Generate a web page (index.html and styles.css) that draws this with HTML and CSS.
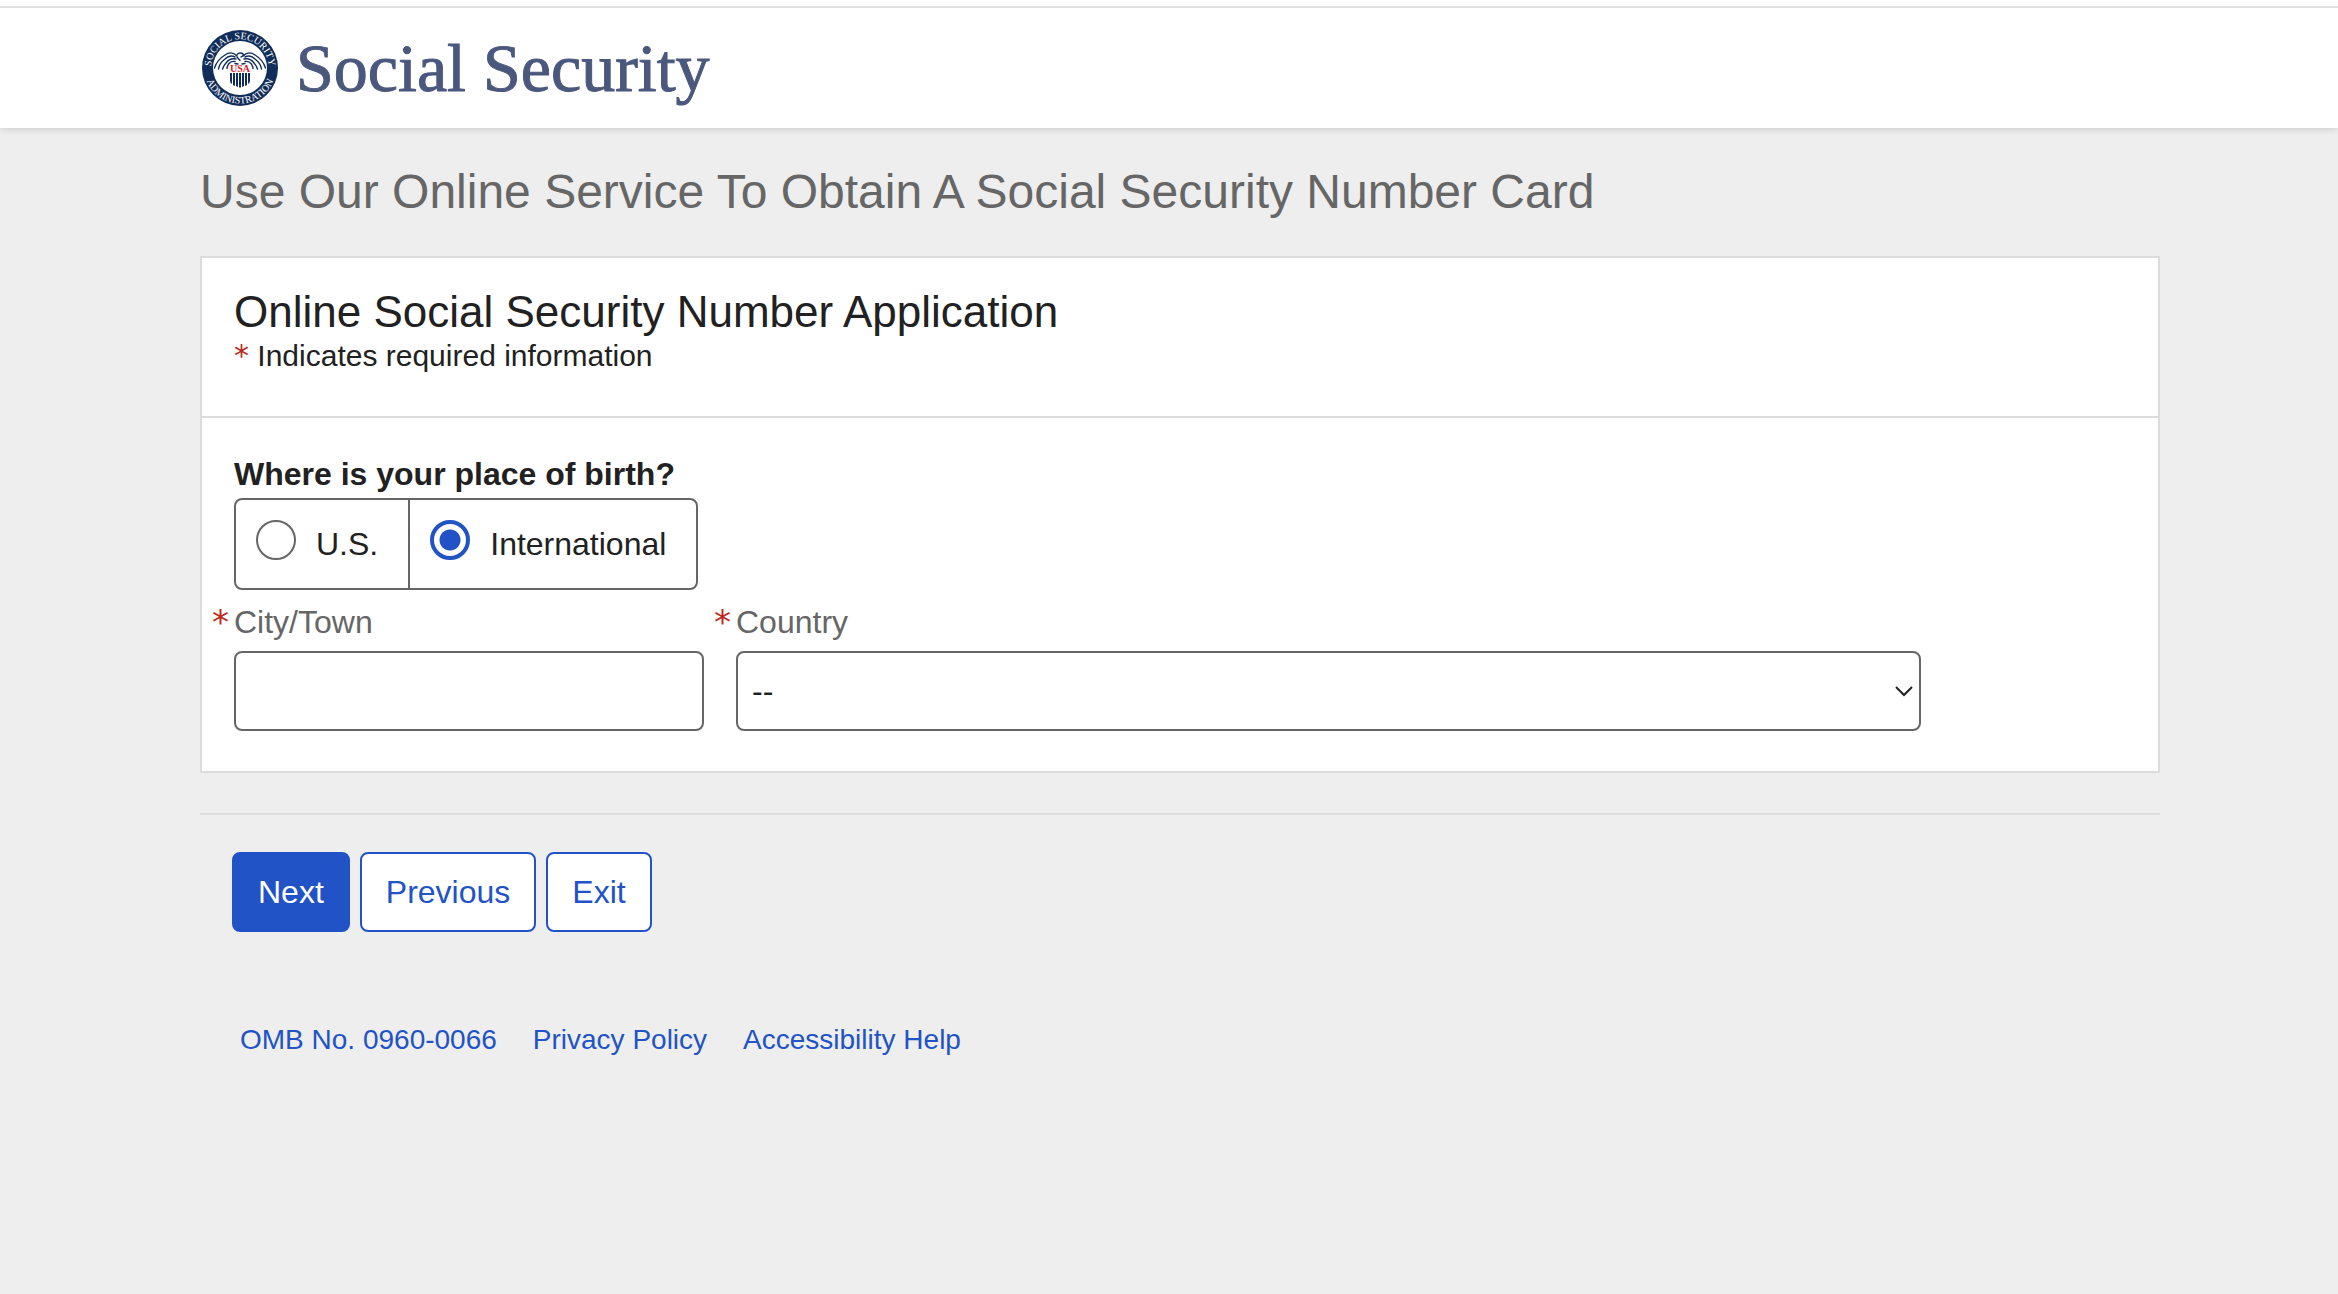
FILE: index.html
```html
<!DOCTYPE html>
<html lang="en">
<head>
    <meta charset="UTF-8">
    <meta name="viewport" content="width=device-width, initial-scale=1.0">
    <title>Social Security Number Application</title>
    <link rel="stylesheet" href="styles.css">
</head>
<body>
    <header class="header">
        <div class="brand">
            <svg class="seal" viewBox="0 0 76 76" aria-hidden="true">
                <defs>
                    <path id="arc-top" d="M9.4 43 A29 29 0 1 1 66.6 43"/>
                    <path id="arc-bottom" d="M2.8 32 A35.7 35.7 0 1 0 73.2 32"/>
                </defs>
                <circle cx="38" cy="38" r="38" fill="#112e5a"/>
                <circle cx="38" cy="38" r="27" fill="#fff"/>
                <text class="seal-text"><textPath href="#arc-top" startOffset="50%">SOCIAL SECURITY</textPath></text>
                <text class="seal-text"><textPath href="#arc-bottom" startOffset="50%">ADMINISTRATION</textPath></text>
                <!-- wings -->
                <g fill="none" stroke="#112e5a" stroke-width="1.4" stroke-linecap="round">
                    <path d="M35 26 C31 22 27 22 23 25 C18 28 14 33 12.500 38"/>
                    <path d="M33 27 C29 25 26 26 23 29 C19 32 17 35 16.500 39"/>
                    <path d="M34 29 C29 28 26 30 24 33 C22 35 21 37 20.500 39"/>
                    <path d="M33 31.500 C30 31 28 32 26.500 34 C25.500 36 25 37 25 38.500"/>
                    <path d="M41 26 C45 22 49 22 53 25 C58 28 62 33 63.500 38"/>
                    <path d="M43 27 C47 25 50 26 53 29 C57 32 59 35 59.500 39"/>
                    <path d="M42 29 C47 28 50 30 52 33 C54 35 55 37 55.500 39"/>
                    <path d="M43 31.500 C46 31 48 32 49.500 34 C50.500 36 51 37 51 38.500"/>
                    <path d="M35 24.500 C37 22.500 40 22.500 42 25 L39 27 M35 27 L38 30.500 M33 33.500 L36 34 M40 34 L43 33.500"/>
                </g>
                <text class="seal-usa" x="38" y="42">USA</text>
                <!-- shield -->
                <path fill="#112e5a" d="M28 43 h2 v11 q-2 -1 -2 -3z M31 43 h2 v13 l-2 -1z M34 43 h2 v14 l-2 -1z M37 43 h2 v14 l-1 1 l-1 -1z M40 43 h2 v13 l-2 1z M43 43 h2 v12 l-2 1z M46 43 h2 v8 q0 2 -2 3z"/>
            </svg>
            <span class="brand-name">Social Security</span>
        </div>
    </header>

    <main class="main">
        <h1 class="title">Use Our Online Service To Obtain A Social Security Number Card</h1>

        <form>
            <section class="card">
                <div class="card-header">
                    <h2 class="card-title">Online Social Security Number Application</h2>
                    <p class="hint"><span class="star">*</span> Indicates required information</p>
                </div>
                <div class="card-body">
                    <fieldset class="question">
                        <legend class="legend">Where is your place of birth?</legend>
                        <div class="options">
                            <label class="option">
                                <input type="radio" name="birthplace" value="us">
                                <span>U.S.</span>
                            </label>
                            <label class="option">
                                <input type="radio" name="birthplace" value="international" checked>
                                <span>International</span>
                            </label>
                        </div>
                    </fieldset>
                    <div class="fields">
                        <div class="field city">
                            <label class="required" for="city">City/Town</label>
                            <input class="control" type="text" id="city">
                        </div>
                        <div class="field country">
                            <label class="required" for="country">Country</label>
                            <div class="select-wrap">
                                <select class="control" id="country">
                                    <option>--</option>
                                </select>
                                <svg class="arrow" viewBox="0 0 18 12" aria-hidden="true">
                                    <path d="M1 2 L9 10 L17 2" fill="none" stroke="#212121" stroke-width="2"/>
                                </svg>
                            </div>
                        </div>
                    </div>
                </div>
            </section>

            <div class="actions">
                <button type="submit" class="button primary">Next</button>
                <button type="button" class="button">Previous</button>
                <button type="button" class="button">Exit</button>
            </div>
        </form>
    </main>

    <footer class="footer">
        <a href="#">OMB No. 0960-0066</a>
        <a href="#">Privacy Policy</a>
        <a href="#">Accessibility Help</a>
    </footer>
</body>
</html>
```

FILE: styles.css
```css
* {
    box-sizing: border-box;
}

body {
    margin: 0;
    min-height: 100vh;
    border-top: 6px solid #fff;
    background: #eee;
    color: #212121;
    font-family: Helvetica, "Liberation Sans", Arial, sans-serif;
    font-size: 32px;
    line-height: 36px;
}

.header {
    padding: 22px 178px 22px 200px;
    border-top: 2px solid #e1e1e1;
    background: #fff;
    box-shadow: 0 2px 6px rgba(0, 0, 0, 0.12);
}

.brand {
    display: flex;
    align-items: center;
    gap: 18px;
}

.seal {
    width: 76px;
    height: 76px;
    margin-left: 2px;
}

.seal-text {
    font-family: "Liberation Serif", serif;
    font-size: 10px;
    text-anchor: middle;
    fill: #fff;
}

.seal-usa {
    font-family: "Liberation Serif", serif;
    font-size: 10px;
    font-weight: bold;
    text-anchor: middle;
    fill: #d8232a;
}

.brand-name {
    font-family: Georgia, "Liberation Serif", serif;
    font-size: 68px;
    line-height: 76px;
    color: #4a587e;
    -webkit-text-stroke: 1px #4a587e;
}

.main {
    padding: 36px 178px 0 200px;
}

.title {
    margin: 0 0 36px;
    font-size: 48px;
    line-height: 56px;
    font-weight: normal;
    color: #666;
}

.card {
    border: 2px solid #ddd;
    background: #fff;
}

.card-header {
    padding: 28px 32px 42px;
    border-bottom: 2px solid #ddd;
}

.card-title {
    margin: 0;
    font-size: 44px;
    line-height: 52px;
    font-weight: normal;
}

.hint {
    margin: 0;
    font-size: 30px;
}

.star {
    color: #c0281c;
    font-family: "DejaVu Sans", sans-serif;
    line-height: 1;
}

.card-body {
    padding: 38px 32px 40px;
}

.question {
    margin: 0;
    padding: 0;
    border: 0;
}

.legend {
    padding: 0;
    margin-bottom: 6px;
    font-weight: bold;
}

.options {
    display: inline-flex;
    vertical-align: top;
    border: 2px solid #666;
    border-radius: 8px;
}

.option {
    display: flex;
    align-items: flex-start;
    gap: 20px;
    height: 88px;
    padding: 20px 30px 0 20px;
}

.option + .option {
    border-left: 2px solid #666;
}

.option span {
    padding-top: 6px;
}

.option input {
    appearance: none;
    width: 40px;
    height: 40px;
    margin: 0;
    border: 2px solid #666;
    border-radius: 50%;
    background: #fff;
}

.option input:checked {
    border: 4px solid #2153c7;
    background: radial-gradient(circle, #2153c7 10px, #fff 11px);
}

.fields {
    display: flex;
    gap: 32px;
    margin-top: 14px;
}

.field {
    display: flex;
    flex-direction: column;
    gap: 11px;
}

.city {
    width: 470px;
}

.country {
    width: 1185px;
}

.required {
    position: relative;
    color: #666;
}

.required::before {
    content: "*";
    position: absolute;
    right: 100%;
    padding-right: 5px;
    color: #c0281c;
    font-family: "DejaVu Sans", sans-serif;
    font-size: 34px;
}

.control {
    width: 100%;
    height: 80px;
    padding: 0 14px;
    border: 2px solid #666;
    border-radius: 8px;
    background: #fff;
    color: #212121;
    font: inherit;
}

.select-wrap {
    position: relative;
}

select.control {
    display: block;
    appearance: none;
}

.arrow {
    position: absolute;
    right: 8px;
    top: 34px;
    width: 18px;
    height: 12px;
    pointer-events: none;
}

.actions {
    display: flex;
    gap: 10px;
    margin-top: 40px;
    padding: 37px 32px 0;
    border-top: 2px solid #ddd;
}

.button {
    height: 80px;
    padding: 0 24px;
    border: 2px solid #2153c7;
    border-radius: 8px;
    background: #fff;
    color: #2153c7;
    font: inherit;
    cursor: pointer;
}

.button.primary {
    background: #2153c7;
    color: #fff;
}

.footer {
    display: flex;
    gap: 36px;
    padding: 90px 178px 40px 240px;
    font-size: 28px;
}

.footer a {
    color: #2153c7;
    text-decoration: none;
}
```
